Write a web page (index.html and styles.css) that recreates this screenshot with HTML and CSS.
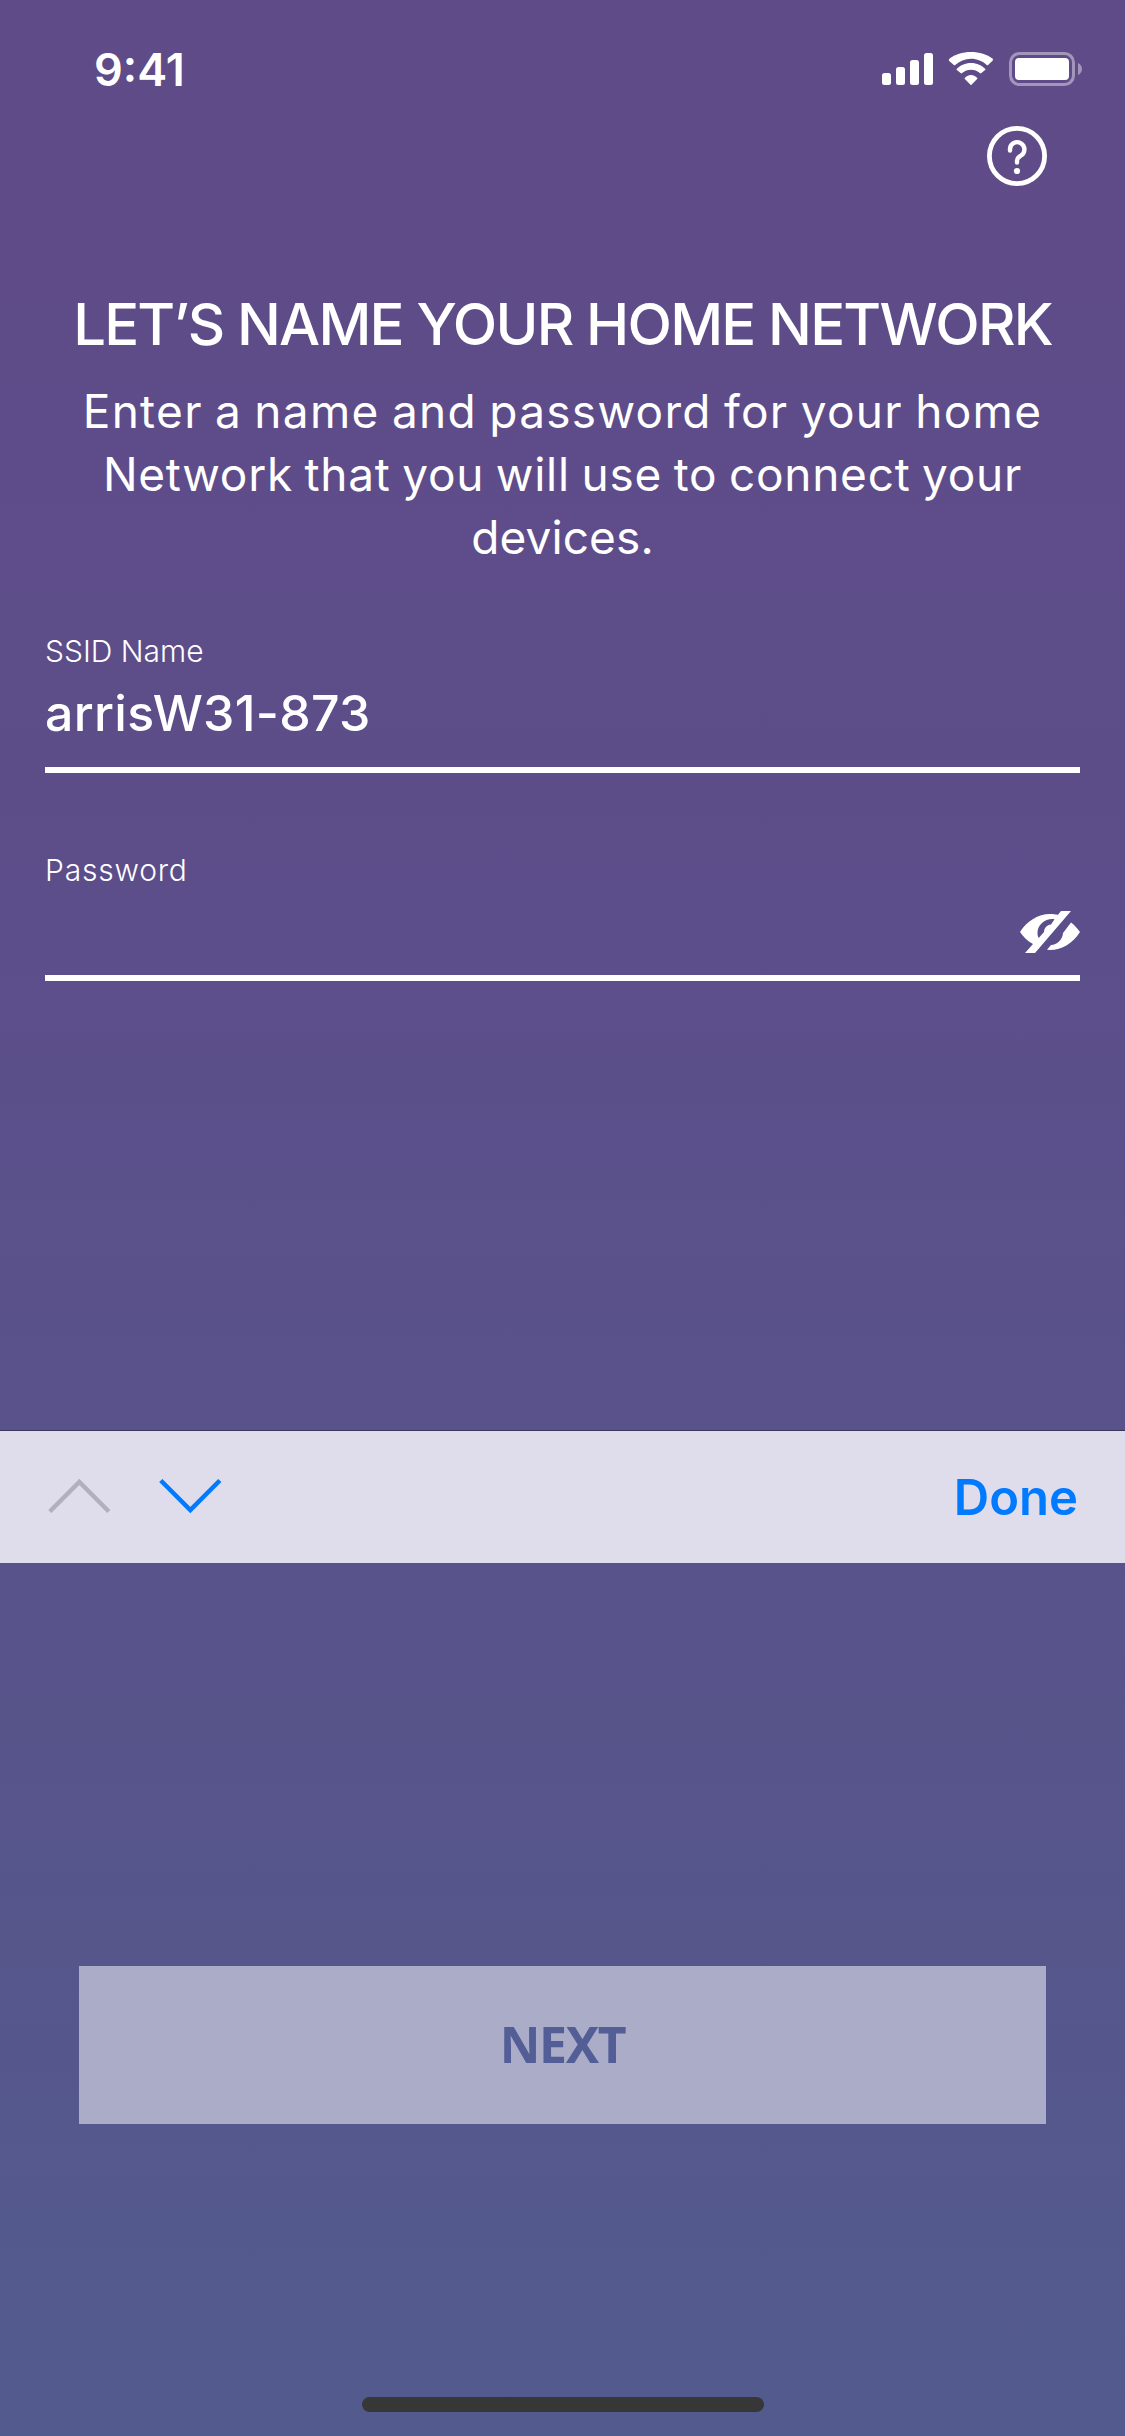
FILE: index.html
```html
<!DOCTYPE html>
<html lang="en">
<head>
<meta charset="utf-8">
<title>Name your home network</title>
<link rel="stylesheet" href="styles.css">
</head>
<body>
<main class="screen">
  <header class="status">
    <span class="time">9:41</span>
    <svg class="status-icons" viewBox="0 0 201 36" width="201" height="36" fill="#fff">
      <rect x="0" y="21" width="9" height="12" rx="2.5"/>
      <rect x="14" y="15" width="9" height="18" rx="2.5"/>
      <rect x="28" y="8" width="9" height="25" rx="2.5"/>
      <rect x="42" y="1" width="9" height="32" rx="2.5"/>
      <path d="M89 6.700c6 0 11.500 2.300 15.700 6.200.4.400 1 .4 1.400 0l4.900-4.600-.2-1.500C105 2.300 97.400 0 89 0S73 2.300 67.300 6.800l-.6 1.700 5.100 4.500c.4.400 1 .4 1.400 0C77.500 9 83 6.700 89 6.700Z"/>
      <path d="M89 17.700c3.300 0 6.500 1.200 8.900 3.400.4.400 1.100.4 1.500 0l4.300-3.700c-3.700-3.900-8.900-6.300-14.700-6.300s-11 2.400-14.700 6.300l4.300 3.700c.4.400 1.100.4 1.500 0 2.400-2.200 5.600-3.400 8.900-3.400Z"/>
      <path d="m95.600 26.500-6.100 6.200a.7.700 0 0 1-1 0l-6.100-6.200c1.600-2.100 4-3.400 6.600-3.400s5 1.300 6.600 3.400Z"/>
      <g opacity=".42">
        <rect x="128.500" y="1.500" width="63" height="31" rx="9" fill="none" stroke="#fff" stroke-width="3"/>
        <path d="M196 11c2.500 1 4 3.500 4 6s-1.500 5-4 6Z"/>
      </g>
      <rect x="133" y="6" width="54" height="22" rx="4"/>
    </svg>
  </header>
  <div class="help-row">
    <svg viewBox="0 0 60 60" width="60" height="60" fill="none" stroke="#fff" aria-label="Help">
      <circle cx="30" cy="30" r="27.600" stroke-width="4.800"/>
      <path d="M23 24.500v-1a7.200 7.200 0 1 1 11 6c-2.700 1.700-4 2.300-4 5v2" stroke-width="4.400" stroke-linecap="round" stroke-linejoin="round"/>
      <circle cx="30" cy="45" r="3.100" fill="#fff" stroke="none"/>
    </svg>
  </div>
  <h1 class="title">LET’S NAME YOUR HOME NETWORK</h1>
  <p class="intro"><span class="line-a">Enter a name and password for your home</span><br><span class="line-b">Network that you will use to connect your</span><br><span class="line-c">devices.</span></p>
  <section class="field ssid">
    <div class="label">SSID Name</div>
    <div class="value">arrisW31-873</div>
  </section>
  <section class="field password">
    <div class="label">Password</div>
    <div class="value">
      <svg class="eye" viewBox="0 0 60 42" width="60" height="42" fill="#fff">
        <path d="M41 0h10L15 42H5l8-9C7 30 3 25 0 21 7 10 18 3 30 3c3 0 5.500.4 8 .8Z"/>
        <path d="M34.500 8.200C26 7 17.500 13 17.500 22c0 2 .4 3.500 1.200 5l5.300-6c.2-4 3-7 7-7.400Z" fill="#5c4e8a"/>
        <path d="m51 11.500c3.500 2.500 6.500 6 9 9.500-7 11-18 18-30 18l-3-.2 4-4.800c6-.3 11.500-5 12-12Z"/>
      </svg>
    </div>
  </section>
  <nav class="accessory">
    <svg viewBox="0 0 174 36" width="174" height="36" fill="none" stroke-width="4.500">
      <path d="M1.800 33.500 31.300 4l29.500 29.500" stroke="#b3b0bd"/>
      <path d="m112.800 2.500 29.500 29.500 29.500-29.500" stroke="#007aff"/>
    </svg>
    <span class="done">Done</span>
  </nav>
  <button class="next">NEXT</button>
  <div class="home"></div>
</main>
</body>
</html>
```
FILE: styles.css
```css
* { box-sizing: border-box; }
body { margin: 0; }
.screen {
  width: 1125px;
  height: 2436px;
  display: flex;
  flex-direction: column;
  background: linear-gradient(#5f4b88, #5c4e8a 38%, #57558b 75%, #525b8e);
  color: #fff;
  font-family: Inter, sans-serif;
  overflow: hidden;
}
.status {
  height: 126px;
  padding: 52px 42px 0 94px;
  display: flex;
  justify-content: space-between;
}
.time { font-size: 45px; line-height: 35px; font-weight: 600; }
.help-row { height: 60px; padding-right: 78px; display: flex; justify-content: flex-end; }
.title {
  margin: 103px 0 0;
  font-size: 58px;
  line-height: 70px;
  font-weight: 500;
  letter-spacing: -1.8px;
  text-align: center;
  white-space: nowrap;
}
.intro {
  margin: 21px 0 0;
  font-size: 46px;
  line-height: 63px;
  text-align: center;
  white-space: nowrap;
  word-spacing: -2px;
}
.line-a { letter-spacing: 1.3px; }
.line-b { letter-spacing: .73px; }
.line-c { letter-spacing: .1px; }
.field {
  margin: 0 45px;
  border-bottom: 6px solid #fff;
}
.label { font-size: 30px; line-height: 40px; font-weight: 300; }
.value { font-size: 50px; line-height: 60px; font-weight: 500; display: flex; }
.ssid { height: 142px; margin-top: 62px; }
.ssid .value { padding-top: 12px; letter-spacing: .3px; }
.password { height: 131px; margin-top: 77px; }
.password .label { letter-spacing: .8px; }
.eye { margin: 21px 0 0 auto; }
.accessory {
  height: 133px;
  margin-top: 449px;
  padding: 0 47px 2px 48px;
  border-top: 1px solid #3d365b;
  background: #dfdcec;
  display: flex;
  align-items: center;
  justify-content: space-between;
}
.done { padding-top: 3px; color: #007aff; font-size: 49px; line-height: 60px; font-weight: 600; }
.next {
  height: 158px;
  margin: 403px 79px 0;
  padding: 0 0 2px;
  border: 0;
  background: #abacc8;
  color: #535e96;
  font: 700 50px "Noto Sans", sans-serif;
  letter-spacing: -1.4px;
}
.home { width: 402px; height: 15px; margin: 273px 0 0 362px; border-radius: 8px; background: #373737; }
```
